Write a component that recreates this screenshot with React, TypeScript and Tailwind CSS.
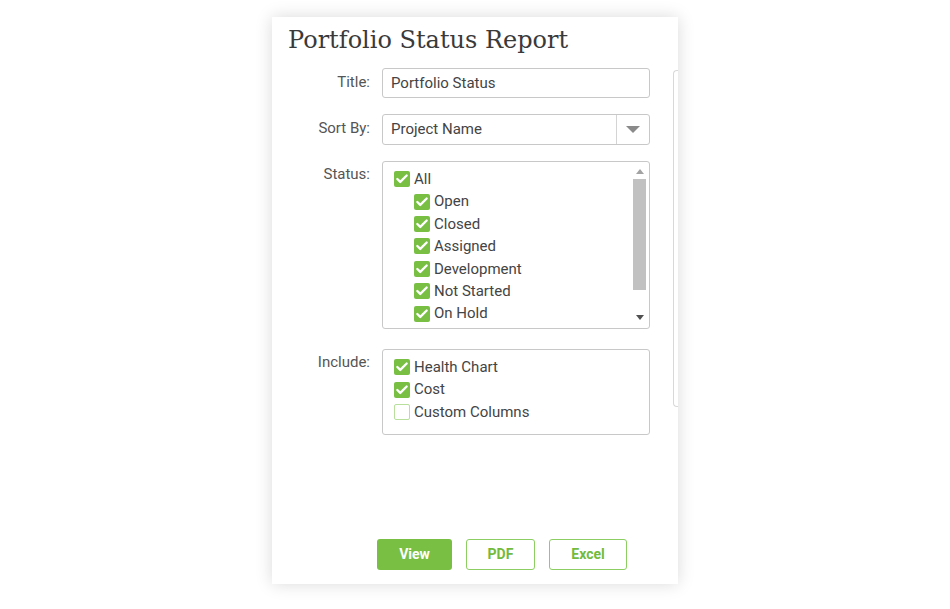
import { Check } from "lucide-react";

const statuses = ["Open", "Closed", "Assigned", "Development", "Not Started", "On Hold"];

function Box({ checked }: { checked: boolean }) {
  return checked ? (
    <span className="flex h-4 w-4 shrink-0 items-center justify-center rounded-[2px] bg-[#78bf44]">
      <Check className="h-3.5 w-3.5 text-white" strokeWidth={4} />
    </span>
  ) : (
    <span className="h-4 w-4 shrink-0 rounded-[2px] border border-[#b9df9d] bg-white" />
  );
}

function Item({ label, checked = true, indent = false }: { label: string; checked?: boolean; indent?: boolean }) {
  return (
    <div className={`flex h-[22.4px] items-center gap-1 ${indent ? "pl-5" : ""}`}>
      <Box checked={checked} />
      <span>{label}</span>
    </div>
  );
}

function Row({ label, top, children }: { label: string; top: string; children: React.ReactNode }) {
  return (
    <div className="flex gap-3">
      <div className={`w-[82px] shrink-0 text-right text-[#555] ${top}`}>{label}</div>
      <div className="w-[268px] shrink-0">{children}</div>
    </div>
  );
}

export default function App() {
  return (
    <div className="flex h-[609px] w-[950px] justify-center bg-white pt-[17px] font-['Roboto',sans-serif] text-[15px] text-[#444]">
      <div className="flex h-[567px] w-[406px] overflow-hidden bg-white shadow-[0_0_16px_rgba(0,0,0,0.15)]">
        <div className="flex w-[401px] shrink-0 flex-col pb-[14px] pl-4">
          <h1 className="pt-[7px] font-['DejaVu_Serif',serif] text-[24px] leading-[32px] text-[#3a3a3a]">
            Portfolio Status Report
          </h1>

          <div className="mt-[12px] flex flex-col gap-4">
            <Row label="Title:" top="pt-[3px]">
              <div className="flex h-[30px] items-center rounded-[3px] border border-[#c8c8c8] px-2">
                Portfolio Status
              </div>
            </Row>
            <Row label="Sort By:" top="pt-[3px]">
              <div className="flex h-[31px] items-center rounded-[3px] border border-[#c8c8c8]">
                <span className="flex-1 px-2">Project Name</span>
                <span className="flex h-full w-[33px] items-center justify-center border-l border-[#d4d4d4]">
                  <svg width="14" height="7" viewBox="0 0 14 7">
                    <path d="M0 0h14L7 7z" fill="#8a8a8a" />
                  </svg>
                </span>
              </div>
            </Row>
            <Row label="Status:" top="pt-[2px]">
              <div className="flex h-[168px] overflow-hidden rounded-[3px] border border-[#c8c8c8]">
                <div className="flex-1 pl-[11px] pt-[6px]">
                  <Item label="All" />
                  {statuses.map((s) => (
                    <Item key={s} label={s} indent />
                  ))}
                </div>
                <div className="flex w-[17px] flex-col items-center pb-[4px] pt-[5px] pr-[2px]">
                  <svg width="8" height="5" viewBox="0 0 8 5" className="mt-[2px]">
                    <path d="M0 5h8L4 0z" fill="#a3a3a3" />
                  </svg>
                  <div className="mt-[5px] h-[111px] w-[13px] bg-[#c1c1c1]" />
                  <div className="flex-1" />
                  <svg width="8" height="5" viewBox="0 0 8 5" className="mb-[4px]">
                    <path d="M0 0h8L4 5z" fill="#505050" />
                  </svg>
                </div>
              </div>
            </Row>
          </div>

          <div className="mt-5">
            <Row label="Include:" top="pt-[2px]">
              <div className="h-[86px] rounded-[3px] border border-[#c8c8c8] pl-[11px] pt-[6px]">
                <Item label="Health Chart" />
                <Item label="Cost" />
                <Item label="Custom Columns" checked={false} />
              </div>
            </Row>
          </div>

          <div className="mt-auto flex gap-[14px] pl-[89px] text-[14px] font-bold">
            <button className="h-[31px] w-[75px] rounded-[3px] bg-[#78bf44] text-white">View</button>
            <button className="h-[31px] w-[69px] rounded-[3px] border-[1.5px] border-[#8cce62] bg-white text-[#72bb3e]">
              PDF
            </button>
            <button className="h-[31px] w-[78px] rounded-[3px] border-[1.5px] border-[#8cce62] bg-white text-[#72bb3e]">
              Excel
            </button>
          </div>
        </div>
        <div className="mt-[53px] h-[337px] w-[20px] shrink-0 rounded-l-[4px] border border-r-0 border-[#d8d8d8]" />
      </div>
    </div>
  );
}
